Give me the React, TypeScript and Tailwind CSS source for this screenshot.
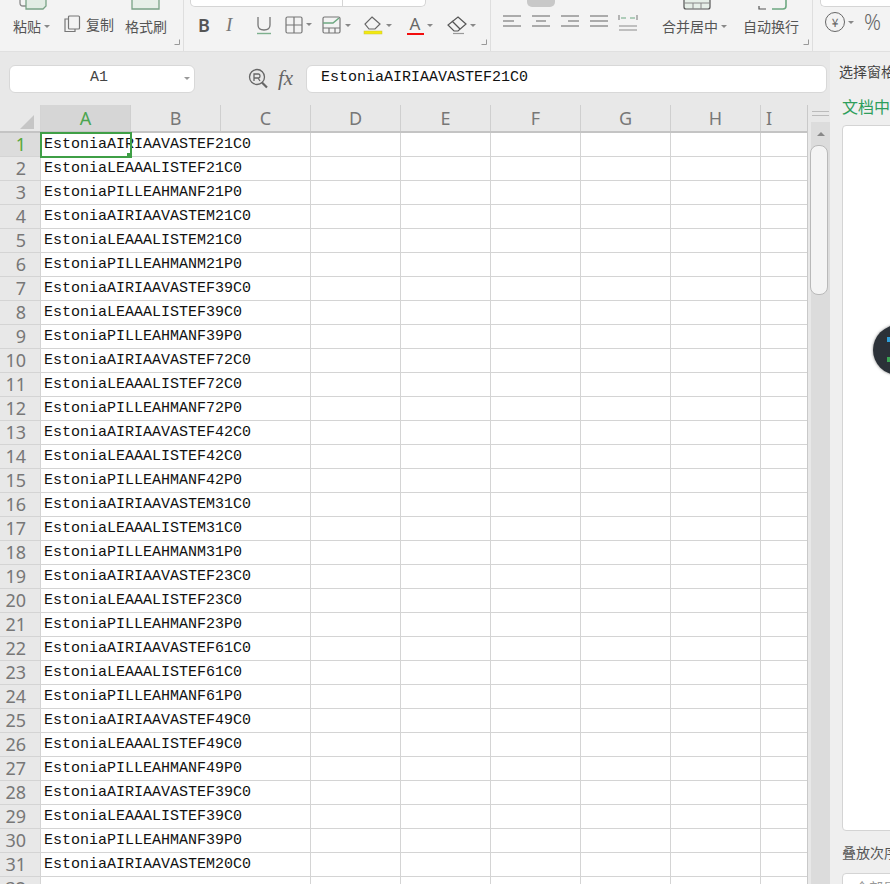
const cjk = "font-['Noto_Sans_CJK_SC','Liberation_Sans',sans-serif]"

const names = ["AIRIAAVASTE", "LEAAALISTE", "PILLEAHMAN"]
const suffixes = ["F21", "M21", "F39", "F72", "F42", "M31", "F23", "F61", "F49", "F39"]

function buildRows() {
  const rows: string[] = []
  suffixes.forEach((s) => {
    rows.push("Estonia" + names[0] + s + "C0")
    rows.push("Estonia" + names[1] + s + "C0")
    rows.push("Estonia" + names[2] + s + "P0")
  })
  rows.push("EstoniaAIRIAAVASTEM20C0")
  rows.push("")
  return rows
}

const rows = buildRows()
const columns = ["A", "B", "C", "D", "E", "F", "G", "H"]

function Caret() {
  return <span className="ml-[3px] inline-block h-0 w-0 border-x-[3px] border-t-[3px] border-x-transparent border-t-[#888]" />
}

function Corner() {
  return (
    <svg width="6" height="6" viewBox="0 0 6 6" className="absolute bottom-[6px] right-[3px]">
      <path d="M5.5 0.5V5.5H0.5" fill="none" stroke="#999" />
    </svg>
  )
}

function AlignIcon({ lines }: { lines: number[][] }) {
  return (
    <svg width="20" height="18" viewBox="0 0 20 18" fill="none" stroke="#8c8c8c" strokeWidth="1.4">
      {lines.map((l, i) => (
        <path key={i} d={`M${l[0]} ${2 + i * 5}H${l[1]}`} />
      ))}
    </svg>
  )
}

function Ribbon() {
  return (
    <div className={`flex h-[52px] shrink-0 overflow-hidden border-b border-[#e0e0e0] bg-[#f3f3f3] text-[14px] leading-[18px] text-[#555] ${cjk}`}>
      {/* clipboard */}
      <div className="relative flex w-[184px] shrink-0 border-r border-[#dedede] pl-[13px]">
        <div className="flex w-[50px] flex-col">
          <svg width="30" height="11" viewBox="0 0 30 11" className="ml-[6px]" fill="none">
            <path d="M1 0V3Q1 6 4 6H7" stroke="#8a8a8a" strokeWidth="1.3" />
            <path d="M7 0V9H24L27 6V0" fill="#e2ece4" stroke="#79a386" strokeWidth="1.3" />
          </svg>
          <div className="mt-[6px] flex items-center">粘贴<Caret /></div>
        </div>
        <div className="mt-[15px] flex h-[18px] w-[62px] items-center">
          <svg width="18" height="18" viewBox="0 0 18 18" fill="none" stroke="#777" strokeWidth="1.2">
            <rect x="5.5" y="1" width="11" height="13" rx="1" />
            <path d="M5 4H2V16.5H12V14" />
          </svg>
          <span className="ml-[5px]">复制</span>
        </div>
        <div className="flex flex-col">
          <svg width="30" height="11" viewBox="0 0 30 11" className="ml-[6px]" fill="none">
            <path d="M1 0V9H28V0" fill="#e6efe8" stroke="#79a386" strokeWidth="1.3" />
          </svg>
          <div className="mt-[6px]">格式刷</div>
        </div>
        <Corner />
      </div>

      {/* font */}
      <div className="relative w-[307px] shrink-0 border-r border-[#dedede]">
        <div className="ml-[6px] flex h-[7px] w-[236px] rounded-b-[5px] border border-t-0 border-[#d5d5d5] bg-white">
          <div className="w-[152px] border-r border-[#d5d5d5]" />
        </div>
        <div className="ml-[14px] mt-[7px] flex h-[22px] items-center">
          <span className="w-[28px] font-['Noto_Sans'] text-[18px] font-semibold text-[#555]">B</span>
          <span className="w-[29px] font-['Liberation_Serif'] text-[19px] italic text-[#777]">I</span>
          <svg width="18" height="20" viewBox="0 0 18 20" fill="none" className="mr-[12px]">
            <path d="M3 2V10Q3 15 9 15T15 10V2" stroke="#777" strokeWidth="1.3" />
            <path d="M2 18.5H16" stroke="#7db08e" strokeWidth="1.4" />
          </svg>
          <svg width="18" height="18" viewBox="0 0 18 18" fill="none" stroke="#777" strokeWidth="1.2">
            <rect x="1" y="1" width="16" height="16" rx="1.5" />
            <path d="M9 1V17M1 9H17" />
          </svg>
          <span className="-mt-[1px] mr-[10px] flex"><Caret /></span>
          <svg width="20" height="18" viewBox="0 0 20 18" fill="none" stroke="#777" strokeWidth="1.2">
            <rect x="1" y="1" width="17" height="16" rx="1.5" />
            <path d="M1 12H18M7 12V17M13 12V17" />
            <path d="M1 7H11L17 2" stroke="#6da881" strokeWidth="1.5" />
          </svg>
          <span className="mr-[12px] flex"><Caret /></span>
          <svg width="20" height="20" viewBox="0 0 20 20" fill="none">
            <path d="M9 2L17 9L12 14H6L2 9Z" stroke="#666" strokeWidth="1.2" />
            <rect x="1" y="16" width="18" height="3" fill="#f2e90f" stroke="#c9c43a" strokeWidth="0.5" />
          </svg>
          <span className="mr-[14px] flex"><Caret /></span>
          <div className="flex w-[18px] flex-col items-center">
            <span className="font-['Noto_Sans'] text-[17px] leading-[18px] text-[#666]">A</span>
            <span className="h-[2px] w-[17px] bg-[#f20d0d]" />
          </div>
          <span className="mr-[14px] flex"><Caret /></span>
          <svg width="20" height="20" viewBox="0 0 20 20" fill="none" stroke="#555" strokeWidth="1.2">
            <path d="M11 2L19 9L11 16H7L1 10Z" />
            <path d="M5 6L13 14" />
            <path d="M6 18.5H17" stroke="#999" />
          </svg>
          <span className="flex"><Caret /></span>
        </div>
        <Corner />
      </div>

      {/* alignment */}
      <div className="relative w-[322px] shrink-0 border-r border-[#dedede]">
        <div className="ml-[36px] h-[7px] w-[28px] rounded-b-[5px] bg-[#c8c8c8]" />
        <div className="ml-[11px] mt-[7px] flex gap-[9px]">
          <AlignIcon lines={[[1, 19], [1, 12], [1, 19]]} />
          <AlignIcon lines={[[1, 19], [5, 15], [1, 19]]} />
          <AlignIcon lines={[[1, 19], [8, 19], [1, 19]]} />
          <AlignIcon lines={[[1, 19], [1, 19], [1, 19]]} />
          <svg width="20" height="18" viewBox="0 0 20 18" fill="none" stroke="#8c8c8c" strokeWidth="1.2">
            <path d="M1 1V6M19 1V6M1 12H19M1 16H19" />
            <path d="M3 4H8M12 4H17" stroke="#6da881" />
          </svg>
        </div>
        <div className="absolute left-[171px] top-[17px] flex items-center text-[#555]">合并居中<Caret /></div>
        <div className="absolute left-[252px] top-[17px]">自动换行</div>
        <svg width="30" height="11" viewBox="0 0 30 11" fill="none" className="absolute left-[191px] top-0">
          <path d="M2 0V7Q2 9 4 9H26Q28 9 28 7V0" fill="#e6efe8" stroke="#555" strokeWidth="1.2" />
          <path d="M11 3V9M19 3V9M2 3H28" stroke="#888" />
        </svg>
        <svg width="32" height="11" viewBox="0 0 32 11" fill="none" className="absolute left-[267px] top-0">
          <path d="M1 6V9H8" stroke="#555" strokeWidth="1.2" />
          <path d="M28 0V6Q28 9 25 9H14" stroke="#6da881" strokeWidth="1.6" />
        </svg>
        <Corner />
      </div>

      {/* number */}
      <div className="relative flex-1">
        <div className="ml-[7px] h-[7px] rounded-bl-[5px] border-b border-l border-[#d5d5d5] bg-white" />
        <div className="ml-[12px] mt-[5px] flex items-center">
          <div className="flex h-[20px] w-[20px] items-center justify-center rounded-full border border-[#666] text-[12px] leading-none text-[#666]">¥</div>
          <span className="flex"><Caret /></span>
          <span className="ml-[10px] font-['Noto_Sans'] text-[21px] font-light text-[#666]">%</span>
        </div>
      </div>
    </div>
  )
}

function FormulaBar() {
  return (
    <div className="flex h-[53px] shrink-0 items-center bg-[#e8e8e8] pl-[9px] pr-[3px]">
      <div className="flex h-[28px] w-[186px] items-center rounded-[6px] border border-[#d8d8d8] bg-white pr-[4px]">
        <span className="flex-1 pl-[4px] text-center font-['Liberation_Mono',monospace] text-[15px] text-[#444]">A1</span>
        <span className="inline-block h-0 w-0 border-x-[3px] border-t-[3px] border-x-transparent border-t-[#999]" />
      </div>
      <svg width="22" height="22" viewBox="0 0 22 22" fill="none" stroke="#666" strokeWidth="1.3" className="ml-[52px]">
        <circle cx="10" cy="9" r="7.5" />
        <path d="M7 13V6H11.5Q13 6 13 8T11.5 10H7M11 10L13 13" />
        <path d="M15 14.5L20 19.5" strokeWidth="2.2" />
      </svg>
      <span className="ml-[9px] w-[28px] font-['Liberation_Serif'] text-[21px] italic text-[#666]">fx</span>
      <div className="flex h-[28px] flex-1 items-center rounded-[6px] border border-[#d8d8d8] bg-white pl-[14px] font-['Liberation_Mono',monospace] text-[15px] text-[#111]">
        EstoniaAIRIAAVASTEF21C0
      </div>
    </div>
  )
}

function Sheet() {
  return (
    <div className="relative flex min-h-0 flex-1 overflow-hidden">
      <div className="w-[807px] shrink-0 bg-white">
        {/* column headers */}
        <div className="flex h-[28px] bg-[#e8e8e8] border-b-2 border-[#c4c4c4] font-['Noto_Sans'] text-[18px] leading-[27px] text-[#777]">
          <div className="relative w-[41px] shrink-0 border-r border-[#d4d4d4]">
            <span className="absolute bottom-[2px] right-[6px] h-0 w-0 border-b-[14px] border-l-[14px] border-b-[#c6c6c6] border-l-transparent" />
          </div>
          {columns.map((c, i) => (
            <div
              key={c}
              className={`w-[90px] shrink-0 border-r border-[#cfcfcf] text-center ${i === 0 ? "bg-[#d6d6d6] text-[#4ba54f]" : ""}`}
            >
              {c}
            </div>
          ))}
          <div className="flex-1 pl-[5px]">I</div>
        </div>
        {/* rows */}
        {rows.map((text, i) => (
          <div key={i} className="flex h-[24px] border-b border-[#d4d4d4]">
            <div
              className={`w-[41px] shrink-0 border-r border-[#d4d4d4] pr-[14px] text-right font-['Noto_Sans'] text-[18px] leading-[23px] ${
                i === 0 ? "bg-[#dcdcdc] text-[#59a838]" : "bg-[#e8e8e8] text-[#777]"
              }`}
            >
              {i + 1}
            </div>
            <div className="w-[270px] shrink-0 border-r border-[#d4d4d4] pl-[3px] font-['Liberation_Mono',monospace] text-[15px] leading-[24px] text-[#111]">
              {text}
            </div>
            {["D", "E", "F", "G", "H"].map((c) => (
              <div key={c} className="w-[90px] shrink-0 border-r border-[#d4d4d4]" />
            ))}
          </div>
        ))}
      </div>

      {/* selected cell */}
      <div className="absolute left-[40px] top-[27px] h-[26px] w-[92px] border-2 border-[#3f9f46]">
        <span className="absolute -bottom-[2px] -right-[2px] h-[5px] w-[5px] bg-[#3f9f46]" />
      </div>

      {/* vertical scrollbar */}
      <div className="flex w-[23px] shrink-0 flex-col border-l border-[#c9c9c9] bg-[#e8e8e8] pl-[3px]">
        <div className="mt-[6px] flex h-[11px] flex-col gap-[3px] px-[1px]">
          <span className="h-px bg-[#bbb]" />
          <span className="h-px bg-[#bbb]" />
        </div>
        <div className="flex min-h-0 flex-1 flex-col bg-[#dcdcdc]">
          <div className="flex h-[24px] shrink-0 items-center justify-center">
            <span className="h-0 w-0 border-x-[4px] border-b-[4px] border-x-transparent border-b-[#888]" />
          </div>
          <div className="-ml-[1px] -mt-[1px] h-[150px] w-[18px] rounded-[8px] border border-[#b9b9b9] bg-[#f4f4f4]" />
        </div>
      </div>
    </div>
  )
}

function SidePanel() {
  return (
    <div className={`relative w-[60px] shrink-0 overflow-hidden bg-[#efefef] text-[14px] ${cjk}`}>
      <div className="flex w-[120px] flex-col pl-[9px] pt-[9px]">
        <div className="h-[20px] leading-[20px] text-[#444]">选择窗格</div>
        <div className="mt-[15px] h-[20px] pl-[3px] text-[16px] leading-[20px] text-[#2e9e5b]">文档中的对象</div>
        <div className="ml-[3px] mt-[9px] h-[706px] rounded-bl-[4px] rounded-tl-[4px] border border-[#d4d4d4] bg-white" />
        <div className="ml-[3px] mt-[11px] h-[20px] leading-[20px] text-[#555]">叠放次序</div>
        <div className="ml-[3px] mt-[11px] h-[30px] rounded-tl-[4px] border border-[#d4d4d4] bg-white pl-[12px] leading-[26px] text-[#999]">全部显示</div>
      </div>
      <div className="absolute left-[43px] top-[273px] h-[50px] w-[50px] rounded-full bg-[#2b3138] shadow-[0_0_3px_rgba(0,0,0,0.5)]">
        <span className="absolute left-[14px] top-[12px] h-[5px] w-[3px] bg-[#2f9ed8]" />
        <span className="absolute left-[14px] top-[32px] h-[5px] w-[3px] bg-[#3ba655]" />
      </div>
    </div>
  )
}

export default function App() {
  return (
    <div className="flex h-[884px] w-[890px] flex-col overflow-hidden bg-[#e8e8e8]">
      <Ribbon />
      <div className="flex min-h-0 flex-1">
        <div className="flex w-[830px] shrink-0 flex-col">
          <FormulaBar />
          <Sheet />
        </div>
        <SidePanel />
      </div>
    </div>
  )
}
